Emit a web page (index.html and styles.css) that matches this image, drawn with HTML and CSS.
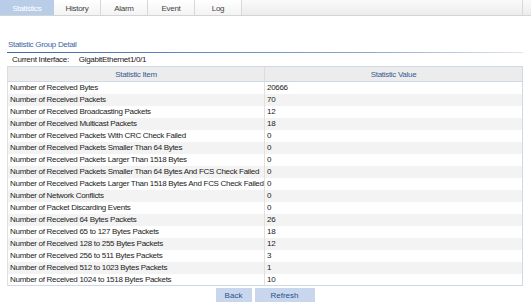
FILE: index.html
```html
<!DOCTYPE html>
<html lang="en">
<head>
    <meta charset="UTF-8">
    <title>Statistics</title>
    <link rel="stylesheet" href="styles.css">
</head>
<body>
    <div class="tabs">
        <div class="tab active">Statistics</div>
        <div class="tab">History</div>
        <div class="tab">Alarm</div>
        <div class="tab">Event</div>
        <div class="tab">Log</div>
        <div class="tab-fill"></div>
    </div>

    <div class="content">
        <div class="section-title">Statistic Group Detail</div>
        <div class="current">
            <span class="label">Current Interface:</span>
            <span>GigabitEthernet1/0/1</span>
        </div>

        <table class="stats">
            <thead>
                <tr>
                    <th>Statistic Item</th>
                    <th>Statistic Value</th>
                </tr>
            </thead>
            <tbody>
                <tr><td>Number of Received Bytes</td><td>20666</td></tr>
                <tr><td>Number of Received Packets</td><td>70</td></tr>
                <tr><td>Number of Received Broadcasting Packets</td><td>12</td></tr>
                <tr><td>Number of Received Multicast Packets</td><td>18</td></tr>
                <tr><td>Number of Received Packets With CRC Check Failed</td><td>0</td></tr>
                <tr><td>Number of Received Packets Smaller Than 64 Bytes</td><td>0</td></tr>
                <tr><td>Number of Received Packets Larger Than 1518 Bytes</td><td>0</td></tr>
                <tr><td>Number of Received Packets Smaller Than 64 Bytes And FCS Check Failed</td><td>0</td></tr>
                <tr><td>Number of Received Packets Larger Than 1518 Bytes And FCS Check Failed</td><td>0</td></tr>
                <tr><td>Number of Network Conflicts</td><td>0</td></tr>
                <tr><td>Number of Packet Discarding Events</td><td>0</td></tr>
                <tr><td>Number of Received 64 Bytes Packets</td><td>26</td></tr>
                <tr><td>Number of Received 65 to 127 Bytes Packets</td><td>18</td></tr>
                <tr><td>Number of Received 128 to 255 Bytes Packets</td><td>12</td></tr>
                <tr><td>Number of Received 256 to 511 Bytes Packets</td><td>3</td></tr>
                <tr><td>Number of Received 512 to 1023 Bytes Packets</td><td>1</td></tr>
                <tr><td>Number of Received 1024 to 1518 Bytes Packets</td><td>10</td></tr>
            </tbody>
        </table>

        <div class="buttons">
            <button class="btn back">Back</button>
            <button class="btn refresh">Refresh</button>
        </div>
    </div>
</body>
</html>
```

FILE: styles.css
```css
* {
    margin: 0;
    padding: 0;
    box-sizing: border-box;
}

body {
    font-family: 'Liberation Sans', Arial, sans-serif;
    font-size: 8px;
    letter-spacing: -0.3px;
    color: #222;
    background: white;
}

.tabs {
    display: flex;
    height: 16px;
    background: linear-gradient(#fafafa, #ececec);
    border-bottom: 1px solid #d4d4d4;
}

.tab {
    width: 47px;
    line-height: 17px;
    text-align: center;
    color: #444;
    background: linear-gradient(#ffffff, #f3f3f3);
    border-right: 1px solid #d8d8d8;
}

.tab.active {
    width: 54px;
    color: white;
    background: #b9cde9;
    border-right: none;
}

.tab-fill {
    flex: 1;
    border-right: 1px solid #d8d8d8;
    margin-right: 8px;
}

.content {
    padding: 24px 8px 0 7px;
}

.section-title {
    color: #3c64a6;
    line-height: 10px;
    padding-left: 1px;
    padding-bottom: 2px;
    border-bottom: 1px solid transparent;
    border-image: linear-gradient(90deg, #3f67a8, #8fa8cf 70%, #dfe6f1) 1;
}

.current {
    padding: 2px 0 0 5px;
    height: 13px;
    line-height: 10px;
}

.current .label {
    margin-right: 8px;
}

.stats {
    width: 100%;
    border-collapse: collapse;
    border: 1px solid #cfd8e6;
}

.stats th {
    height: 15px;
    font-weight: normal;
    color: #3a5a98;
    background: #ececec;
    border-left: 1px solid #dcdcdc;
    border-bottom: 1px solid #cfd8e6;
}

.stats th:first-child {
    width: 257px;
}

.stats td {
    height: 12px;
    line-height: 11px;
    padding-left: 2px;
    white-space: nowrap;
    border-left: 1px solid #e0e0e0;
}

.stats tbody tr:nth-child(even) td {
    background: #f3f3f3;
}

.buttons {
    display: flex;
    justify-content: center;
    gap: 3px;
    padding-top: 2px;
}

.btn {
    font-family: 'Liberation Sans', Arial, sans-serif;
    font-size: 8px;
    height: 14px;
    color: #2d4f8c;
    background: #c8d7ed;
    border: none;
}

.btn.back {
    width: 36px;
}

.btn.refresh {
    width: 60px;
}
```
